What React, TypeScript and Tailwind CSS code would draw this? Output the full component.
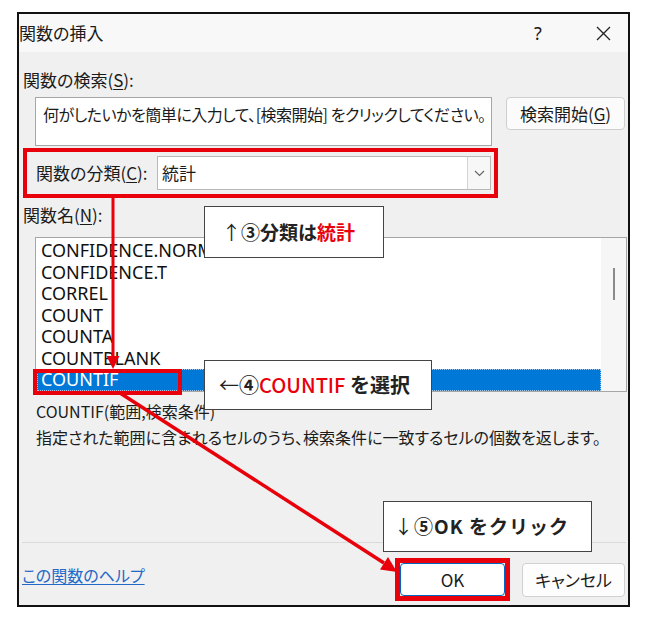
import React from 'react';

const jp = "font-['Noto_Sans_CJK_JP',sans-serif] [font-feature-settings:'palt']";
const latin = "font-['Noto_Sans','Noto_Sans_CJK_JP',sans-serif]";

const functions = [
  'CONFIDENCE.NORM',
  'CONFIDENCE.T',
  'CORREL',
  'COUNT',
  'COUNTA',
  'COUNTBLANK',
  'COUNTIF',
];

function Mnemonic({ label, k }: { label: string; k: string }) {
  return (
    <>
      {label}(<span className="underline underline-offset-2">{k}</span>):
    </>
  );
}

export default function App() {
  return (
    <div className="relative h-[625px] w-[647px] overflow-hidden bg-white pt-[12px] text-[17px] text-[#1b1b1b]">
      {/* dialog */}
      <div
        className={`ml-[17px] flex h-[595px] w-[613px] flex-col whitespace-nowrap border-2 border-[#111] bg-[#f0f0f0] *:shrink-0 ${jp}`}
      >
        <div className="flex h-[38px] items-center bg-[#f8f8f8]">
          <span className="leading-[20px]">関数の挿入</span>
          <span className={`ml-auto w-[20px] text-center text-[18px] ${latin}`}>?</span>
          <svg className="ml-[48px] mr-[17px]" width="15" height="15" viewBox="0 0 15 15">
            <path d="M1 1 L14 14 M14 1 L1 14" stroke="#222" strokeWidth="1.3" fill="none" />
          </svg>
        </div>

        <div className="ml-[4px] mt-[18px] leading-[20px]">
          <Mnemonic label="関数の検索" k="S" />
        </div>

        <div className="mt-[7px] flex items-start">
          <div className="ml-[16px] h-[49px] w-[457px] overflow-hidden border border-[#a6a6a6] bg-white px-[7px] pt-[5px] text-[16px] leading-[22px] tracking-[-0.5px]">
            何がしたいかを簡単に入力して、[検索開始] をクリックしてください。
          </div>
          <button className="ml-[14px] flex h-[33px] w-[119px] items-center justify-center rounded-[4px] border border-[#cfcfcf] bg-[#fbfbfb]">
            検索開始(<span className="underline underline-offset-2">G</span>)
          </button>
        </div>

        <div className="ml-[4px] mt-[2px] flex h-[50px] w-[475px] items-center border-4 border-[#e8000b]">
          <span className="pl-[9px] leading-[20px]">
            <Mnemonic label="関数の分類" k="C" />
          </span>
          <div className="ml-auto mr-[3px] flex h-[34px] w-[334px] border border-[#b8b8b8] bg-white">
            <span className="flex-1 pl-[4px] leading-[32px]">統計</span>
            <div className="flex w-[23px] items-center justify-center border-l border-[#d4d4d4] bg-[#f7f7f7]">
              <svg width="11" height="7" viewBox="0 0 11 7">
                <path d="M1 1 L5.5 5.5 L10 1" stroke="#666" strokeWidth="1.2" fill="none" />
              </svg>
            </div>
          </div>
        </div>

        <div className="ml-[4px] mt-[7px] leading-[20px]">
          <Mnemonic label="関数名" k="N" />
        </div>

        <div className="ml-[16px] mt-[12px] flex h-[155px] w-[592px] border border-[#a6a6a6] bg-white">
          <div className={`flex-1 pt-[2px] text-[18px] ${latin}`}>
            {functions.map((f) => (
              <div
                key={f}
                className={
                  f === 'COUNTIF'
                    ? 'ml-[1px] h-[21.5px] border border-dotted border-[#9cc8f0] bg-[#0078d7] pl-[3px] leading-[19.5px] text-white'
                    : 'h-[21.5px] pl-[5px] leading-[21.5px] text-[#111]'
                }
              >
                {f}
              </div>
            ))}
          </div>
          <div className="w-[25px] bg-[#f6f6f6] pt-[30px]">
            <div className="mx-auto h-[32px] w-[2px] bg-[#8a8a8a]" />
          </div>
        </div>

        <div className="ml-[17px] mt-[9px] text-[16px] leading-[20px]">COUNTIF(範囲,検索条件)</div>
        <div className="ml-[17px] mt-[6px] text-[16px] leading-[20px]">
          指定された範囲に含まれるセルのうち、検索条件に一致するセルの個数を返します。
        </div>

        <div className="ml-[3px] mr-[2px] mt-[95px] h-px bg-[#dadada]" />

        <div className="mt-[20px] flex h-[34px] items-start">
          <a className="ml-[3px] mt-[2px] text-[16px] leading-[20px] text-[#2468c8] underline underline-offset-2">
            この関数のヘルプ
          </a>
          <button className="ml-auto h-[33px] w-[105px] rounded-[4px] border border-[#0067c0] bg-white">OK</button>
          <button className="ml-[17px] mr-[3px] h-[34px] w-[103px] rounded-[4px] border border-[#d0d0d0] bg-[#fdfdfd]">
            キャンセル
          </button>
        </div>
      </div>

      {/* annotations */}
      <div className="pointer-events-none absolute left-[33px] top-[369px] h-[26px] w-[149px] border-4 border-[#e8000b]" />
      <div className="pointer-events-none absolute left-[395px] top-[558px] h-[43px] w-[115px] border-[5px] border-[#e8000b]" />

      <svg className="pointer-events-none absolute left-0 top-0" width="647" height="625" viewBox="0 0 647 625">
        <path d="M113 198 L113 357" stroke="#e8000b" strokeWidth="3" />
        <path d="M106.5 356 L119.5 356 L113 369 Z" fill="#e8000b" />
        <path d="M120 393 L384 563" stroke="#e8000b" strokeWidth="3.5" />
        <path d="M397 572 L380 569.5 L388 557 Z" fill="#e8000b" />
      </svg>

      <div className="absolute left-[204px] top-[206px] flex h-[52px] w-[180px] items-center whitespace-nowrap border border-[#444] bg-white pl-[17px] font-['Noto_Sans_CJK_JP',sans-serif] text-[19px] font-bold text-[#222]">
        <span className="font-normal">↑</span>③分類は<span className="text-[#e8000b]">統計</span>
      </div>
      <div className="absolute left-[204px] top-[360px] flex h-[50px] w-[228px] items-center whitespace-nowrap border border-[#444] bg-white pl-[14px] font-['Noto_Sans_CJK_JP',sans-serif] text-[20px] font-bold text-[#222]">
        <span className="font-normal">←</span>④<span className="font-medium text-[#e8000b]">COUNTIF</span>&nbsp;を選択
      </div>
      <div className="absolute left-[383px] top-[501px] flex h-[51px] w-[209px] items-center whitespace-nowrap border border-[#444] bg-white pl-[10px] font-['Noto_Sans_CJK_JP',sans-serif] text-[19px] font-bold tracking-[1px] text-[#222]">
        <span className="font-normal">↓</span>⑤OK をクリック
      </div>
    </div>
  );
}
